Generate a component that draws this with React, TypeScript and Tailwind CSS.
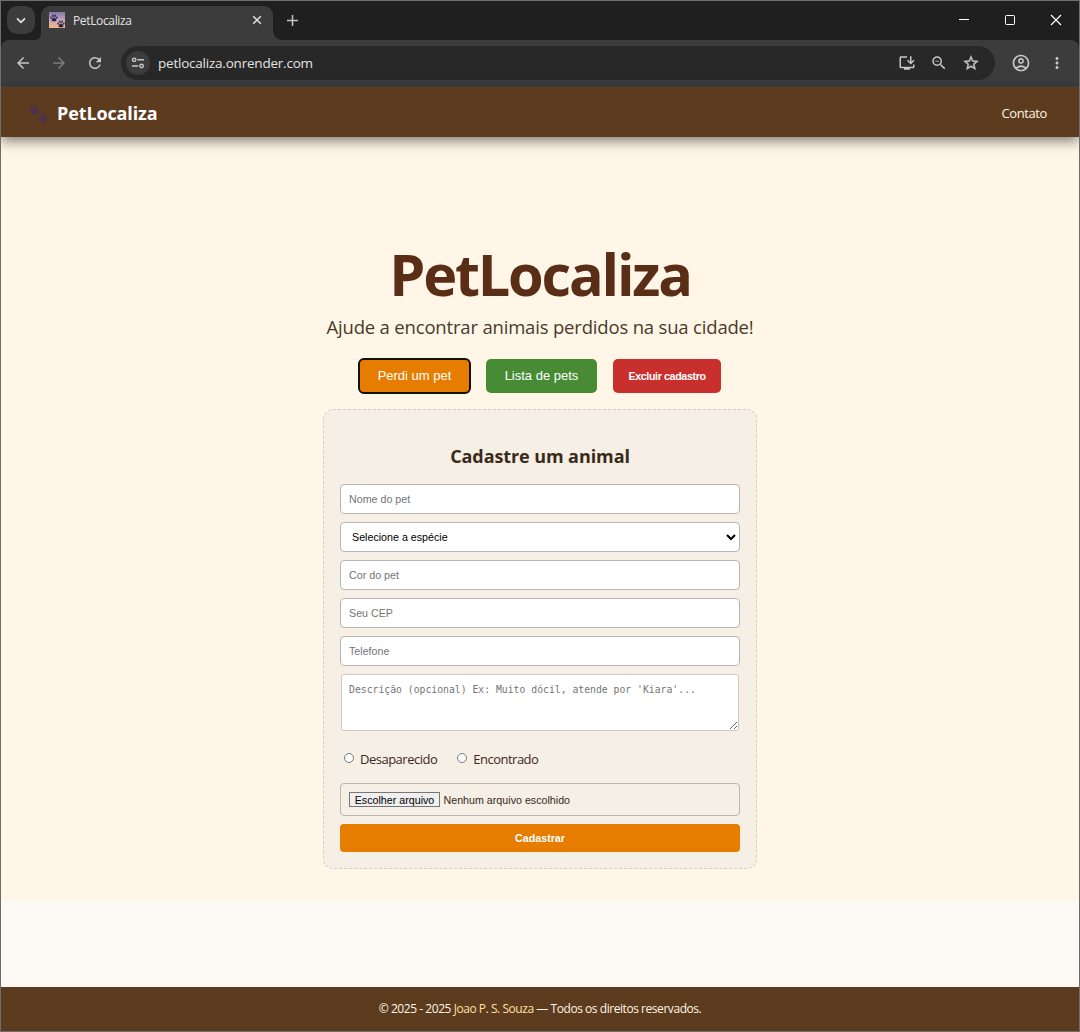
import type { ReactNode } from 'react';
import {
  MdArrowBack,
  MdArrowForward,
  MdRefresh,
  MdOutlineAccountCircle,
  MdMoreVert,
  MdStarOutline,
  MdInstallDesktop,
  MdZoomOut,
} from 'react-icons/md';

function Paw({ className }: { className: string }) {
  return (
    <svg viewBox="0 0 20 20" className={className} fill="currentColor">
      <ellipse cx="3" cy="9" rx="2" ry="3" transform="rotate(-20 3 9)" />
      <ellipse cx="7.3" cy="4.2" rx="2" ry="3.1" />
      <ellipse cx="12.7" cy="4.2" rx="2" ry="3.1" />
      <ellipse cx="17" cy="9" rx="2" ry="3" transform="rotate(20 17 9)" />
      <path d="M10 8.500c3 0 6 4.500 6 7.200 0 3-3.200 2.600-6 2.600s-6 .4-6-2.600C4 13 7 8.500 10 8.500z" />
    </svg>
  );
}

function Favicon() {
  return (
    <span className="flex h-4 w-4 flex-col bg-linear-to-b from-[#8478a8] via-[#c3a3bd] to-[#f3b878] pt-[2px]">
      <Paw className="ml-px h-[8px] w-[8px] text-[#2b2350]" />
      <Paw className="-mt-[2px] h-[8px] w-[8px] self-end text-[#2b2350]" />
    </span>
  );
}

function TabStrip() {
  return (
    <div className="flex h-[39px] bg-[#1f1f1f] text-[#e3e3e3]">
      <div className="mt-[5px] ml-[6px] flex h-[28px] w-[28px] items-center justify-center rounded-[10px] bg-[#3c3c3c]">
        <svg width="10" height="7" viewBox="0 0 10 7" fill="none" stroke="currentColor" strokeWidth="1.700">
          <path d="M1 1.300l4 4 4-4" />
        </svg>
      </div>
      <div className="flex w-[6px] items-end bg-[#3c3c3c]">
        <div className="h-full w-full rounded-br-[6px] bg-[#1f1f1f]" />
      </div>
      <div className="flex w-[232px] bg-[#1f1f1f]">
        <div className="mt-[5px] flex flex-1 items-center rounded-t-[9px] bg-[#3c3c3c] pr-[11px] pb-[6px] pl-2">
          <Favicon />
          <span className="mt-[2px] ml-2 text-[12px] leading-4 tracking-[-0.35px]">PetLocaliza</span>
          <svg className="ml-auto" width="10" height="10" viewBox="0 0 10 10" stroke="currentColor" strokeWidth="1.500">
            <path d="M1.200 1.200l7.600 7.600M8.800 1.200l-7.600 7.600" />
          </svg>
        </div>
      </div>
      <div className="w-[9px] bg-[#3c3c3c]">
        <div className="h-full w-full rounded-bl-[9px] bg-[#1f1f1f]" />
      </div>
      <svg className="mt-[14px] ml-[5px] text-[#c4c4c4]" width="11" height="11" viewBox="0 0 11 11" stroke="currentColor" strokeWidth="1.500">
        <path d="M5.500 0v11M0 5.500h11" />
      </svg>
      <div className="mt-[14px] ml-auto flex items-start pr-[17px] text-white">
        <svg width="10" height="10" viewBox="0 0 10 10" stroke="currentColor">
          <path d="M0 4.500h10" />
        </svg>
        <svg className="ml-[36px]" width="10" height="10" viewBox="0 0 10 10" fill="none" stroke="currentColor">
          <rect x=".5" y=".5" width="9" height="9" rx=".8" />
        </svg>
        <svg className="-mt-px ml-[35px]" width="12" height="12" viewBox="0 0 12 12" stroke="currentColor" strokeWidth="1.200">
          <path d="M1 1l10 10M11 1l-10 10" />
        </svg>
      </div>
    </div>
  );
}

function Toolbar() {
  return (
    <div className="bg-[#1f1f1f]">
      <div className="flex h-[46px] items-center rounded-t-[8px] bg-[#3c3c3c] pr-[13px] pl-[14px] text-[#c7c7c7]">
        <MdArrowBack size={18} className="-ml-px" />
        <MdArrowForward size={18} className="ml-[18px] text-[#7b7b7b]" />
        <MdRefresh size={18} className="ml-[18px]" />
        <div className="ml-[17px] flex h-[34px] flex-1 items-center rounded-full bg-[#282828] pr-[15px] pl-[5px]">
          <span className="flex h-6 w-6 items-center justify-center rounded-full bg-[#3c3c3c]">
            <svg width="14" height="12" viewBox="0 0 14 12" fill="none" stroke="currentColor" strokeWidth="1.400">
              <circle cx="3.200" cy="2.800" r="1.700" />
              <path d="M6.500 2.800H13M1 9h6.300" />
              <circle cx="10.600" cy="9" r="1.700" />
            </svg>
          </span>
          <span className="ml-2 text-[13.500px] leading-5 tracking-[-0.22px] text-[#e3e3e3]">petlocaliza.onrender.com</span>
          <MdInstallDesktop size={18} className="ml-auto" />
          <MdZoomOut size={18} className="ml-[14px]" />
          <MdStarOutline size={18} className="ml-[14px]" stroke="currentColor" strokeWidth={0.5} />
        </div>
        <MdOutlineAccountCircle size={20} className="ml-4" />
        <MdMoreVert size={18} className="ml-[17px]" />
      </div>
      <div className="h-px bg-[#494643]" />
    </div>
  );
}

function SiteHeader() {
  return (
    <header className="relative z-10 flex h-[50px] items-center bg-[#5d3b1e] pt-[2px] pr-8 pl-[27px] shadow-[0_4px_12px_rgba(0,0,0,0.5)]">
      <span className="flex h-5 w-5 flex-col pt-[2px]">
        <Paw className="ml-px h-[10px] w-[10px] -rotate-[20deg] text-[#492f5a]" />
        <Paw className="-mt-[2px] h-[10px] w-[10px] -rotate-[20deg] self-end text-[#492f5a]" />
      </span>
      <span className="ml-[9px] text-[18px] leading-6 font-bold tracking-[-0.12px] text-white">PetLocaliza</span>
      <a className="ml-auto text-[13px] leading-5 tracking-[-0.4px] text-[#fff6e6]">Contato</a>
    </header>
  );
}

function Field({ children }: { children: string }) {
  return (
    <input
      placeholder={children}
      className="block h-[30px] w-full rounded-[4px] border border-[#b9b6b2] bg-white px-2 font-['Liberation_Sans',sans-serif] text-[10.700px] placeholder:text-[#757575]"
    />
  );
}

function Choice({ children }: { children: ReactNode }) {
  return (
    <label className="flex items-center text-[13px] leading-5 tracking-[-0.5px] text-[#3b2a1a]">
      <input type="radio" className="mr-[6px] mb-[2px] h-[10px] w-[10px]" />
      {children}
    </label>
  );
}

function PetForm() {
  return (
    <section className="mt-[15px] h-[460px] w-[434px] rounded-[10px] border border-dashed border-[#d5cdc3] bg-[#f5efe6] px-4 pt-[33px]">
      <h2 className="h-[26px] text-center text-[18px] leading-[26px] font-bold tracking-[-0.09px] text-[#3b2a1a]">
        Cadastre um animal
      </h2>
      <div className="mt-[15px] flex flex-col gap-2">
        <Field>Nome do pet</Field>
        <select className="block h-[30px] w-full rounded-[4px] border border-[#b9b6b2] bg-white px-[7px] font-['Liberation_Sans',sans-serif] text-[10.700px] text-black">
          <option>Selecione a espécie</option>
        </select>
        <Field>Cor do pet</Field>
        <Field>Seu CEP</Field>
        <Field>Telefone</Field>
        <textarea
          placeholder="Descrição (opcional) Ex: Muito dócil, atende por 'Kiara'..."
          className="mx-px block h-[57px] resize rounded-[3px] border border-[#ccc9c5] bg-white px-[7px] py-[8px] font-['DejaVu_Sans_Mono',monospace] text-[9.780px] leading-[13px] placeholder:text-[#757575]"
        />
      </div>
      <div className="mt-[18px] flex gap-5 pl-1">
        <Choice>Desaparecido</Choice>
        <Choice>Encontrado</Choice>
      </div>
      <div className="mt-[14px] flex h-[33px] items-center rounded-[4px] border border-[#b9b6b2] px-2 pt-px font-['Liberation_Sans',sans-serif] text-[10.700px] text-[#3b2a1a]">
        <button className="mb-px h-[15px] w-[91px] border border-[#767676] bg-[#efefef] text-center leading-[14px] text-black">
          Escolher arquivo
        </button>
        <span className="ml-[3.500px]">Nenhum arquivo escolhido</span>
      </div>
      <button className="mt-2 block h-7 w-full rounded-[4px] bg-[#e67c00] font-['Liberation_Sans',sans-serif] text-[10.700px] font-bold text-white">
        Cadastrar
      </button>
    </section>
  );
}

export default function App() {
  return (
    <div className="flex h-[1032px] w-[1080px] flex-col overflow-hidden border border-[#6e6e6e] bg-[#fdf9f5] font-['Open_Sans','Noto_Sans',sans-serif]">
      <TabStrip />
      <Toolbar />
      <SiteHeader />
      <main className="flex h-[763px] flex-col items-center bg-[#fff6e7] pt-[99px]">
        <h1 className="text-[57.600px] leading-[76px] font-bold tracking-[-2.200px] text-[#5a2d17]">PetLocaliza</h1>
        <p className="mt-[2px] text-[18.500px] leading-[26px] font-normal tracking-[-0.18px] text-[#4a3a2a]">
          Ajude a encontrar animais perdidos na sua cidade!
        </p>
        <div className="mt-[18px] flex items-center gap-4 font-['Liberation_Sans',sans-serif] text-white">
          <button className="-mx-px h-9 w-[113px] rounded-[6px] border-2 border-[#101010] bg-[#e67c00] text-[13px]">
            Perdi um pet
          </button>
          <button className="h-[34px] w-[111px] rounded-[5px] bg-[#488b35] text-[13px]">Lista de pets</button>
          <button className="h-[34px] w-[108px] rounded-[5px] bg-[#c92f2d] text-[10.700px] font-bold tracking-[-0.37px]">
            Excluir cadastro
          </button>
        </div>
        <PetForm />
      </main>
      <footer className="mt-auto flex h-[44px] items-center justify-center bg-[#5d3b1e] text-[12px] leading-4 tracking-[-0.45px] whitespace-pre text-[#fff6e6]">
        © 2025 - 2025 <a className="text-[#ffe0a3]">Joao P. S. Souza</a> — Todos os direitos reservados.
      </footer>
    </div>
  );
}
